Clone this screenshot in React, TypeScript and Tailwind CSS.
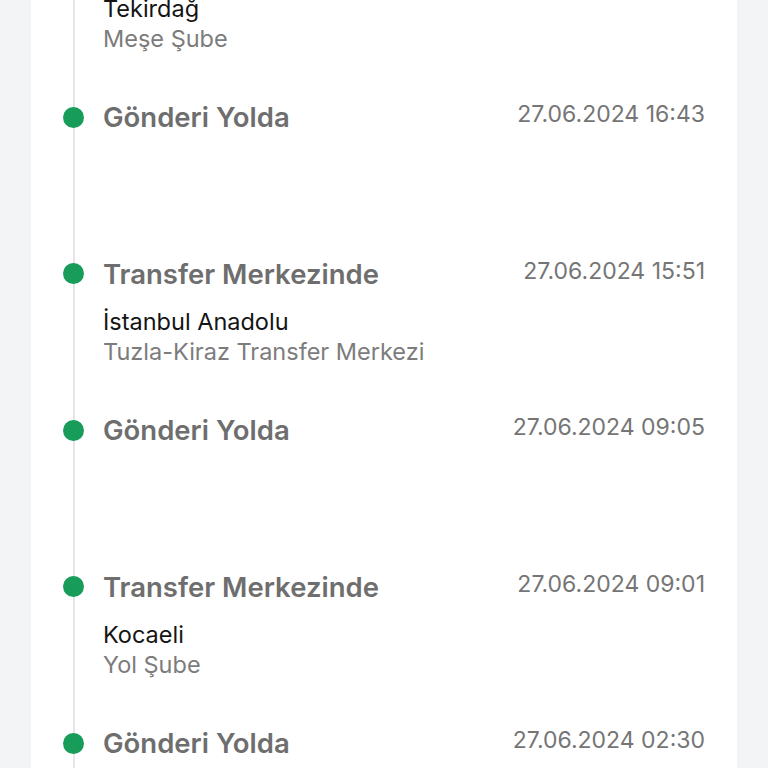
import React from "react";

type Item = { title: string; date: string; city?: string; branch?: string };

const items: Item[] = [
  { title: "Gönderi Yolda", date: "27.06.2024 16:43" },
  { title: "Transfer Merkezinde", date: "27.06.2024 15:51", city: "İstanbul Anadolu", branch: "Tuzla-Kiraz Transfer Merkezi" },
  { title: "Gönderi Yolda", date: "27.06.2024 09:05" },
  { title: "Transfer Merkezinde", date: "27.06.2024 09:01", city: "Kocaeli", branch: "Yol Şube" },
  { title: "Gönderi Yolda", date: "27.06.2024 02:30" },
];

export default function App() {
  return (
    <div
      className="h-[768px] overflow-hidden bg-[#f3f4f6]"
      style={{ fontFamily: "Inter, 'Noto Sans', sans-serif" }}
    >
      <div className="relative ml-[31px] h-full w-[706px] bg-white">
        <div className="absolute bottom-0 left-[41.5px] top-0 w-[2px] bg-[#e5e5e5]" />
        <div className="relative flex flex-col">
          <div className="mt-[-6px] flex flex-col pl-[72px] text-[23.5px] leading-[30px]">
            <span className="text-[#141414]">Tekirdağ</span>
            <span className="text-[#7c7c7c]">Meşe Şube</span>
          </div>
          <div className="h-[47px]" />
          {items.map((it, i) => (
            <div key={i} className="flex h-[156.5px] flex-col">
              <div className="flex h-8 items-center">
                <div className="ml-[32px] h-[21px] w-[21px] shrink-0 rounded-full bg-[#179c5a]" />
                <div className="ml-[19px] flex-1 text-[27.5px] font-semibold leading-8 text-[#6e6e6e]">
                  {it.title}
                </div>
                <div className="mr-[32px] mt-[-6px] text-[23px] leading-8 text-[#757575]">
                  {it.date}
                </div>
              </div>
              {it.city && (
                <div className="mt-[17px] flex flex-col pl-[72px] text-[23.5px] leading-[30px]">
                  <span className="text-[#141414]">{it.city}</span>
                  <span className="text-[#7c7c7c]">{it.branch}</span>
                </div>
              )}
            </div>
          ))}
        </div>
      </div>
    </div>
  );
}
